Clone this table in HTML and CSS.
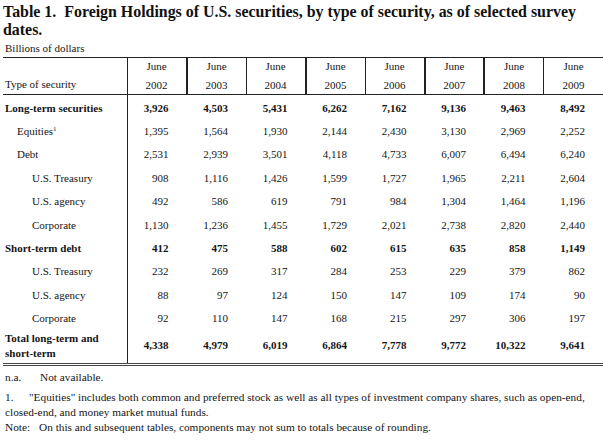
FILE: index.html
```html
<!DOCTYPE html>
<html>
<head>
<meta charset="utf-8">
<link rel="stylesheet" href="styles.css">
</head>
<body>
<div class="page">
  <h1 class="title">Table 1.&nbsp; Foreign Holdings of U.S. securities, by type of security, as of selected survey dates.</h1>
  <div class="units">Billions of dollars</div>
  <table class="tbl">
    <colgroup>
      <col class="c-label">
      <col class="c-num"><col class="c-num"><col class="c-num"><col class="c-num">
      <col class="c-num"><col class="c-num"><col class="c-num"><col class="c-num">
    </colgroup>
    <thead>
      <tr>
        <th class="lab">Type of security</th>
        <th class="b1"><span>June</span><span>2002</span></th>
        <th class="b2"><span>June</span><span>2003</span></th>
        <th class="b1"><span>June</span><span>2004</span></th>
        <th class="b2"><span>June</span><span>2005</span></th>
        <th class="b1"><span>June</span><span>2006</span></th>
        <th class="b2"><span>June</span><span>2007</span></th>
        <th class="b2"><span>June</span><span>2008</span></th>
        <th class="b1"><span>June</span><span>2009</span></th>
      </tr>
    </thead>
    <tbody>
      <tr class="bold first"><td class="lab">Long-term securities</td><td>3,926</td><td>4,503</td><td>5,431</td><td>6,262</td><td>7,162</td><td>9,136</td><td>9,463</td><td>8,492</td></tr>
      <tr><td class="lab i1">Equities<sup>1</sup></td><td>1,395</td><td>1,564</td><td>1,930</td><td>2,144</td><td>2,430</td><td>3,130</td><td>2,969</td><td>2,252</td></tr>
      <tr><td class="lab i1">Debt</td><td>2,531</td><td>2,939</td><td>3,501</td><td>4,118</td><td>4,733</td><td>6,007</td><td>6,494</td><td>6,240</td></tr>
      <tr><td class="lab i2">U.S. Treasury</td><td>908</td><td>1,116</td><td>1,426</td><td>1,599</td><td>1,727</td><td>1,965</td><td>2,211</td><td>2,604</td></tr>
      <tr><td class="lab i2">U.S. agency</td><td>492</td><td>586</td><td>619</td><td>791</td><td>984</td><td>1,304</td><td>1,464</td><td>1,196</td></tr>
      <tr><td class="lab i2">Corporate</td><td>1,130</td><td>1,236</td><td>1,455</td><td>1,729</td><td>2,021</td><td>2,738</td><td>2,820</td><td>2,440</td></tr>
      <tr class="bold"><td class="lab">Short-term debt</td><td>412</td><td>475</td><td>588</td><td>602</td><td>615</td><td>635</td><td>858</td><td>1,149</td></tr>
      <tr><td class="lab i2">U.S. Treasury</td><td>232</td><td>269</td><td>317</td><td>284</td><td>253</td><td>229</td><td>379</td><td>862</td></tr>
      <tr><td class="lab i2">U.S. agency</td><td>88</td><td>97</td><td>124</td><td>150</td><td>147</td><td>109</td><td>174</td><td>90</td></tr>
      <tr><td class="lab i2">Corporate</td><td>92</td><td>110</td><td>147</td><td>168</td><td>215</td><td>297</td><td>306</td><td>197</td></tr>
      <tr class="bold total"><td class="lab">Total long-term and<br>short-term</td><td>4,338</td><td>4,979</td><td>6,019</td><td>6,864</td><td>7,778</td><td>9,772</td><td>10,322</td><td>9,641</td></tr>
    </tbody>
  </table>
  <div class="notes">
    <p class="note"><span class="key na">n.a.</span><span>Not available.</span></p>
    <p class="note"><span class="key one">1.</span><span>"Equities" includes both common and preferred stock as well as all types of investment company shares, such as open-end,</span><br><span>closed-end, and money market mutual funds.</span></p>
    <p class="note"><span class="key nt">Note:</span><span>On this and subsequent tables, components may not sum to totals because of rounding.</span></p>
  </div>
</div>
</body>
</html>
```

FILE: styles.css
```css
html, body {
  margin: 0;
  padding: 0;
  background: #ffffff;
}
body {
  font-family: "Liberation Serif", "Times New Roman", serif;
  color: #151515;
}
.page {
  width: 600px;
  padding: 3px 0 0 3px;
}
.title {
  margin: 0;
  font-family: "Liberation Serif", "Times New Roman", serif;
  font-size: 15.9px;
  line-height: 18px;
  font-weight: bold;
  color: #111;
  width: 590px;
}
.units {
  font-family: "Liberation Serif", "Times New Roman", serif;
  font-size: 11px;
  line-height: 13px;
  margin-top: 3px;
  padding-left: 2px;
}
.tbl {
  border-collapse: collapse;
  table-layout: fixed;
  width: 600px;
  margin-top: 2px;
  font-family: "Liberation Serif", "Times New Roman", serif;
  font-size: 11px;
}
.c-label { width: 124px; }
.c-num { width: 59.5px; }
.tbl thead th {
  font-weight: normal;
  border-top: 1px solid #222;
  border-bottom: 1px solid #222;
  height: 37px;
  box-sizing: border-box;
  padding: 0;
  vertical-align: top;
  text-align: center;
}
.tbl thead th span {
  display: block;
  line-height: 13px;
}
.tbl thead th span:first-child { margin-top: 2px; }
.tbl thead th span + span { margin-top: 6px; }
.tbl thead th.lab {
  text-align: left;
  vertical-align: bottom;
  padding: 0 0 3px 2px;
  line-height: 13px;
}
.tbl thead th.b1 { border-left: 1px solid #222; }
.tbl thead th.b2 { border-left: 2px solid #222; }
.tbl tbody td {
  height: 23.4px;
  padding: 0 18px 0 0;
  text-align: right;
  line-height: 13px;
  vertical-align: middle;
  box-sizing: border-box;
}
.tbl tbody tr.first td {
  height: 25.4px;
  padding-top: 2px;
}
.tbl tbody td.lab {
  text-align: left;
  padding-left: 2px;
  padding-right: 0;
  border-right: 1px solid #222;
}
.tbl tbody td.i1 { padding-left: 14px; }
.tbl tbody td.i2 { padding-left: 29px; }
.tbl tbody tr.bold td { font-weight: bold; }
.tbl tbody tr.total td {
  height: 34px;
  border-bottom: 3px double #444;
  line-height: 15px;
  padding-bottom: 2px;
}
sup {
  font-size: 7px;
  line-height: 0;
  vertical-align: 4px;
}
.notes {
  margin-top: 4px;
  font-family: "Liberation Serif", "Times New Roman", serif;
  font-size: 11.3px;
  line-height: 15px;
  padding-left: 2px;
}
.note {
  margin: 0 0 5px 0;
  width: 598px;
  white-space: nowrap;
}
.note:nth-child(2) { margin-bottom: 0; }
.key { display: inline-block; }
.key.na { width: 35px; }
.key.one { width: 24px; }
.key.nt { width: 34px; }
```
